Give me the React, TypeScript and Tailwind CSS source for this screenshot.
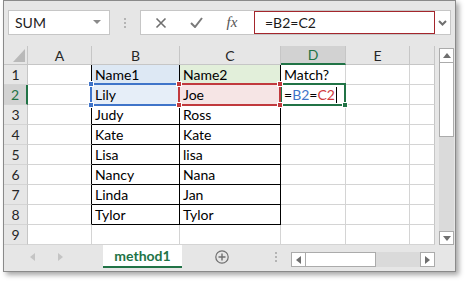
import React from 'react';

const GRID = '#d4d4d4';
const HEAD_LINE = '#c6c6c6';

const COLS = ['A', 'B', 'C', 'D', 'E', ''];

const ROWS: { b?: string; c?: string; d?: string }[] = [
  { b: 'Name1', c: 'Name2', d: 'Match?' },
  { b: 'Lily', c: 'Joe' },
  { b: 'Judy', c: 'Ross' },
  { b: 'Kate', c: 'Kate' },
  { b: 'Lisa', c: 'lisa' },
  { b: 'Nancy', c: 'Nana' },
  { b: 'Linda', c: 'Jan' },
  { b: 'Tylor', c: 'Tylor' },
  {},
];

const Handle: React.FC<{ color: string; pos: string }> = ({ color, pos }) => (
  <div className={`absolute z-30 h-[6px] w-[6px] border border-white ${color} ${pos}`} />
);

const HeaderCell: React.FC<{ label: string; active?: boolean }> = ({ label, active }) => (
  <div
    className={`flex items-center justify-center border-r text-[14px] ${
      active
        ? 'border-b-2 border-b-[#217346] border-r-[#c6c6c6] bg-[#d2d2d2] text-[#217346]'
        : 'border-b border-[#c6c6c6] bg-[#e6e6e6] text-[#262626]'
    }`}
  >
    {label}
  </div>
);

export default function App() {
  return (
    <div className="h-[283px] w-[466px] overflow-hidden bg-white font-['Lato',sans-serif]">
      <div className="ml-[3px] flex h-[272px] w-[453px] flex-col border border-[#8a8a8a] bg-[#e6e6e6] shadow-[3px_3px_5px_rgba(0,0,0,0.35)]">
        {/* formula bar */}
        <div className="flex h-[45px] shrink-0 items-start pt-[9px]">
          <div className="ml-[4px] flex h-[25px] w-[102px] items-center justify-between border border-[#c6c6c6] bg-white pl-[6px] pr-[8px] text-[14px] text-[#222]">
            <span>SUM</span>
            <svg width="8" height="5" viewBox="0 0 8 5">
              <path d="M0 0h8L4 4z" fill="#8a8a8a" />
            </svg>
          </div>
          <div className="flex h-[25px] w-[30px] flex-col items-center justify-center gap-[2px]">
            <div className="h-[2px] w-[2px] bg-[#b4b4b4]" />
            <div className="h-[2px] w-[2px] bg-[#b4b4b4]" />
            <div className="h-[2px] w-[2px] bg-[#b4b4b4]" />
          </div>
          <div className="flex h-[25px] w-[311px] items-center border border-[#c6c6c6] bg-white">
            <div className="flex w-[113px] items-center">
              <div className="flex w-[38px] justify-center pl-[2px]">
                <svg width="12" height="12" viewBox="0 0 12 12">
                  <path d="M1.5 1.5l9 9M10.5 1.5l-9 9" stroke="#6f6f6f" strokeWidth="1.6" />
                </svg>
              </div>
              <div className="flex w-[34px] justify-center">
                <svg width="13" height="11" viewBox="0 0 13 11">
                  <path d="M1 6l4 4L12 1" stroke="#7a7a7a" strokeWidth="2" fill="none" />
                </svg>
              </div>
              <div className="flex w-[38px] justify-center font-['Liberation_Serif',serif] text-[15px] italic text-[#555]">
                fx
              </div>
            </div>
            <div className="flex h-[23px] w-[181px] items-center border border-[#a4262c] pl-[10px] text-[14px] text-[#1a1a1a]">
              =B2=C2
            </div>
            <div className="flex flex-1 justify-center">
              <svg width="9" height="6" viewBox="0 0 9 6">
                <path d="M1 1l3.5 3.5L8 1" stroke="#6f6f6f" strokeWidth="2" fill="none" />
              </svg>
            </div>
          </div>
        </div>

        {/* grid + vertical scroll */}
        <div className="flex h-[199px] shrink-0">
          <div className="grid w-[431px] grid-cols-[24px_64px_88px_101px_65px_64px_25px] grid-rows-[19px_repeat(9,20px)] text-[14px] text-black">
            <div className="relative border-b border-r border-[#c6c6c6] bg-[#e6e6e6]">
              <svg className="absolute bottom-[2px] right-[2px]" width="12" height="13" viewBox="0 0 12 13">
                <path d="M12 0v13H0z" fill="#b9b9b9" />
              </svg>
            </div>
            {COLS.map((c) => (
              <HeaderCell key={c || 'F'} label={c} active={c === 'D'} />
            ))}

            {ROWS.map((r, i) => {
              const n = i + 1;
              const inTable = n <= 8;
              const rowActive = n === 2;
              return (
                <React.Fragment key={n}>
                  <div
                    className={`flex items-center justify-center border-b border-b-[#d4d4d4] ${
                      rowActive
                        ? 'border-r-2 border-r-[#217346] bg-[#d2d2d2] text-[#217346]'
                        : 'border-r border-r-[#c6c6c6] bg-[#e6e6e6] text-[#262626]'
                    }`}
                  >
                    {n}
                  </div>
                  {/* A */}
                  <div
                    className={`border-b border-r bg-white ${inTable ? 'border-r-black' : 'border-r-[#d4d4d4]'} border-b-[#d4d4d4]`}
                  />
                  {/* B */}
                  <div
                    className={`relative flex items-center border-b border-r pl-[3px] ${
                      inTable ? 'border-black' : 'border-[#d4d4d4]'
                    } ${n === 1 ? 'bg-[#dde8f4]' : n === 2 ? 'bg-[#e6eef8]' : 'bg-white'}`}
                  >
                    {r.b}
                    {n === 2 && (
                      <>
                        <div className="absolute -left-[2px] -top-[2px] -right-[1px] bottom-[-2px] z-10 border-2 border-[#3f74c9]" />
                        <Handle color="bg-[#3f74c9]" pos="-left-[4px] -top-[4px]" />
                        <Handle color="bg-[#3f74c9]" pos="-left-[4px] -bottom-[4px]" />
                      </>
                    )}
                  </div>
                  {/* C */}
                  <div
                    className={`relative flex items-center border-b border-r pl-[3px] ${
                      inTable ? 'border-black' : 'border-[#d4d4d4]'
                    } ${n === 1 ? 'bg-[#e2efda]' : n === 2 ? 'bg-[#f6e5e5]' : 'bg-white'}`}
                  >
                    {r.c}
                    {n === 2 && (
                      <>
                        <div className="absolute -left-[2px] -top-[2px] -right-[1px] bottom-[-2px] z-20 border-2 border-[#c1393d]" />
                        <Handle color="bg-[#c1393d]" pos="-left-[4px] -top-[4px]" />
                        <Handle color="bg-[#c1393d]" pos="-left-[4px] -bottom-[4px]" />
                        <Handle color="bg-[#c1393d]" pos="-right-[3px] -top-[4px]" />
                        <Handle color="bg-[#c1393d]" pos="-right-[3px] -bottom-[4px]" />
                      </>
                    )}
                  </div>
                  {/* D */}
                  <div className="relative flex items-center border-b border-r border-[#d4d4d4] bg-white pl-[3px]">
                    {r.d}
                    {n === 2 && (
                      <>
                        <span>=</span>
                        <span className="text-[#3f74c9]">B2</span>
                        <span>=</span>
                        <span className="text-[#d0393d]">C2</span>
                        <span className="ml-[1px] h-[16px] w-[1px] bg-black" />
                        <div className="absolute -left-[1px] -top-[2px] -right-[1px] bottom-[-2px] z-10 border-2 border-[#217346]" />
                        <Handle color="bg-[#217346]" pos="-right-[3px] -bottom-[4px]" />
                      </>
                    )}
                  </div>
                  <div className="border-b border-r border-[#d4d4d4] bg-white" />
                  <div className="border-b border-r border-b-[#d4d4d4] border-r-[#c6c6c6] bg-white" />
                </React.Fragment>
              );
            })}
          </div>

          {/* vertical scrollbar */}
          <div className="flex w-[20px] flex-col pl-[4px] pr-[1px] pt-[2px]">
            <div className="flex h-[15px] items-center justify-center border border-[#ababab] bg-white">
              <svg width="8" height="5" viewBox="0 0 8 5">
                <path d="M0 5h8L4 0z" fill="#6f6f6f" />
              </svg>
            </div>
            <div className="h-[74px] border-x border-b border-[#ababab] bg-white" />
            <div className="flex-1 bg-[#dadada]" />
            <div className="flex h-[14px] items-center justify-center border border-[#ababab] bg-white">
              <svg width="8" height="5" viewBox="0 0 8 5">
                <path d="M0 0h8L4 5z" fill="#6f6f6f" />
              </svg>
            </div>
          </div>
        </div>

        {/* sheet tabs */}
        <div className="flex flex-1 items-start">
          <div className="flex h-[23px] w-[99px] items-center">
            <svg className="ml-[26px]" width="5" height="8" viewBox="0 0 5 8">
              <path d="M5 0v8L0 4z" fill="#c4c4c4" />
            </svg>
            <svg className="ml-[23px]" width="5" height="8" viewBox="0 0 5 8">
              <path d="M0 0v8l5-4z" fill="#c4c4c4" />
            </svg>
          </div>
          <div className="flex h-[23px] w-[79px] items-center justify-center border-b-2 border-[#217346] bg-white pb-[1px] text-[14px] font-bold text-[#217346]">
            method1
          </div>
          <div className="ml-[33px] flex h-[23px] items-center">
            <svg width="14" height="14" viewBox="0 0 14 14">
              <circle cx="7" cy="7" r="6.2" stroke="#6f6f6f" strokeWidth="1.2" fill="none" />
              <path d="M7 3.5v7M3.5 7h7" stroke="#6f6f6f" strokeWidth="1.4" />
            </svg>
          </div>
          <div className="ml-[46px] flex h-[23px] flex-col items-center justify-center gap-[2px]">
            <div className="h-[2px] w-[2px] bg-[#b4b4b4]" />
            <div className="h-[2px] w-[2px] bg-[#b4b4b4]" />
            <div className="h-[2px] w-[2px] bg-[#b4b4b4]" />
          </div>
          <div className="ml-[14px] mt-[7px] flex h-[15px] w-[144px]">
            <div className="flex w-[15px] items-center justify-center border border-[#ababab] bg-white">
              <svg width="5" height="8" viewBox="0 0 5 8">
                <path d="M5 0v8L0 4z" fill="#6f6f6f" />
              </svg>
            </div>
            <div className="w-[70px] border-y border-r border-[#ababab] bg-white" />
            <div className="flex-1 bg-[#dadada]" />
            <div className="flex w-[15px] items-center justify-center border border-[#ababab] bg-white">
              <svg width="5" height="8" viewBox="0 0 5 8">
                <path d="M0 0v8l5-4z" fill="#6f6f6f" />
              </svg>
            </div>
          </div>
        </div>
      </div>
    </div>
  );
}
